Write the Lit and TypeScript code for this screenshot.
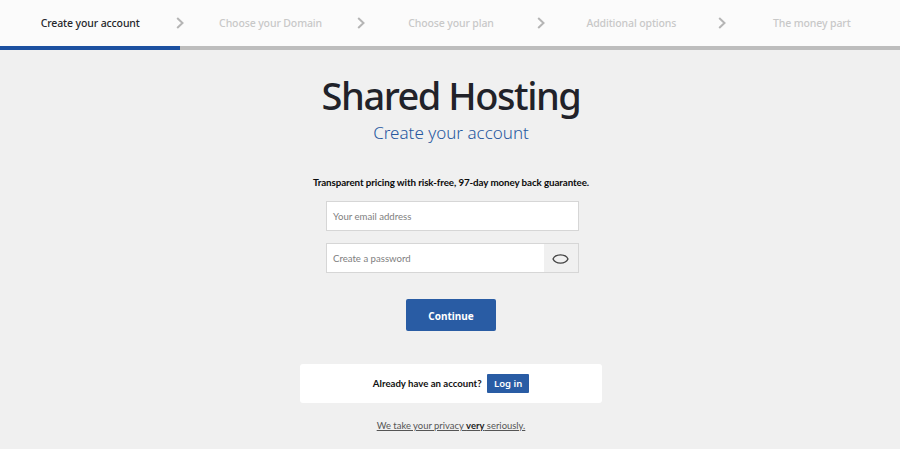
import { LitElement, html, css, svg } from "lit";
import { customElement } from "lit/decorators.js";

const steps = ["Create your account", "Choose your Domain", "Choose your plan", "Additional options", "The money part"];

@customElement("app-root")
export class AppRoot extends LitElement {
  static styles = css`
    :host { display: block; width: 900px; height: 449px; overflow: hidden; background: #f0f0f0; font-family: "Lato", "Noto Sans", sans-serif; }
    .nav { display: grid; grid-template-columns: repeat(5, 180.4px); height: 46px; background: #fbfbfb; }
    .step { position: relative; display: flex; align-items: center; justify-content: center; height: 46px; font: 500 10.5px/1 "Noto Sans", sans-serif; letter-spacing: -0.12px; color: #c8c8c8; }
    .step.active { color: #26272b; }
    .chev { position: absolute; right: -4px; top: 17px; width: 8px; height: 12px; }
    .bar { height: 4px; background: #bdbdbd; display: flex; }
    .bar i { display: block; width: 180px; background: #1c50a0; }
    main { display: flex; flex-direction: column; align-items: center; padding-left: 2px; }
    h1 { margin: 23px 0 0; font: 500 38px/44px "Noto Sans", sans-serif; letter-spacing: -1.47px; color: #212229; }
    h2 { margin: 4px 0 0; font: 300 17px/24px "Noto Sans", sans-serif; color: #27589f; }
    .lead { margin: 30px 0 0; font: 700 9.8px/14px "Lato", sans-serif; letter-spacing: -0.1px; color: #0c0c0c; }
    .field { box-sizing: border-box; width: 253px; height: 30px; background: #fff; border: 1px solid #d6d6d6; display: flex; align-items: center; padding: 1px 0 0 6.5px; font-size: 9.6px; color: #808080; margin-left: 2px; }
    .email { margin-top: 12px; }
    .pass { margin-top: 12px; position: relative; }
    .eye { position: absolute; right: 0; top: 0; bottom: 0; width: 34px; background: #f0f0f0; display: flex; align-items: center; justify-content: center; }
    .eye svg { width: 17px; height: 11px; }
    .continue { margin-top: 26px; box-sizing: border-box; width: 90px; height: 32px; padding-top: 1px; background: #295ca4; border-radius: 2px; color: #fff; display: flex; align-items: center; justify-content: center; font: 700 10px/1 "Noto Sans", sans-serif; }
    .login { margin-top: 33px; box-sizing: border-box; width: 302px; height: 39px; background: #fff; border-radius: 3px; display: flex; align-items: center; justify-content: center; gap: 5.5px; font: 700 9.65px/1 "Lato", sans-serif; color: #111; }
    .login b { display: flex; align-items: center; justify-content: center; width: 42px; height: 19px; background: #295ca4; color: #fff; border-radius: 1px; font: 600 9.5px/1 "Noto Sans", sans-serif; }
    .privacy { margin-top: 16px; font-size: 9.45px; line-height: 14px; color: #555; text-decoration: underline; }
    .privacy b { color: #222; }
  `;

  render() {
    const chev = svg`<path d="M1.2 1 L6.5 6 L1.2 11" fill="none" stroke="#b5b5b5" stroke-width="2"/>`;
    return html`
      <div class="nav">
        ${steps.map((s, i) => html`
          <div class="step ${i === 0 ? "active" : ""}">${s}
            ${i < 4 ? html`<svg class="chev" viewBox="0 0 8 12">${chev}</svg>` : ""}
          </div>`)}
      </div>
      <div class="bar"><i></i></div>
      <main>
        <h1>Shared Hosting</h1>
        <h2>Create your account</h2>
        <p class="lead">Transparent pricing with risk-free, 97-day money back guarantee.</p>
        <div class="field email">Your email address</div>
        <div class="field pass">Create a password
          <span class="eye"><svg viewBox="0 0 17 11"><path d="M1 6 C3.5 0.6 13.5 0.6 16 6 C13.5 11.4 3.5 11.4 1 6 Z" fill="none" stroke="#444" stroke-width="1.3"/></svg></span>
        </div>
        <div class="continue">Continue</div>
        <div class="login">Already have an account? <b>Log in</b></div>
        <div class="privacy">We take your privacy <b>very</b> seriously.</div>
      </main>
    `;
  }
}
